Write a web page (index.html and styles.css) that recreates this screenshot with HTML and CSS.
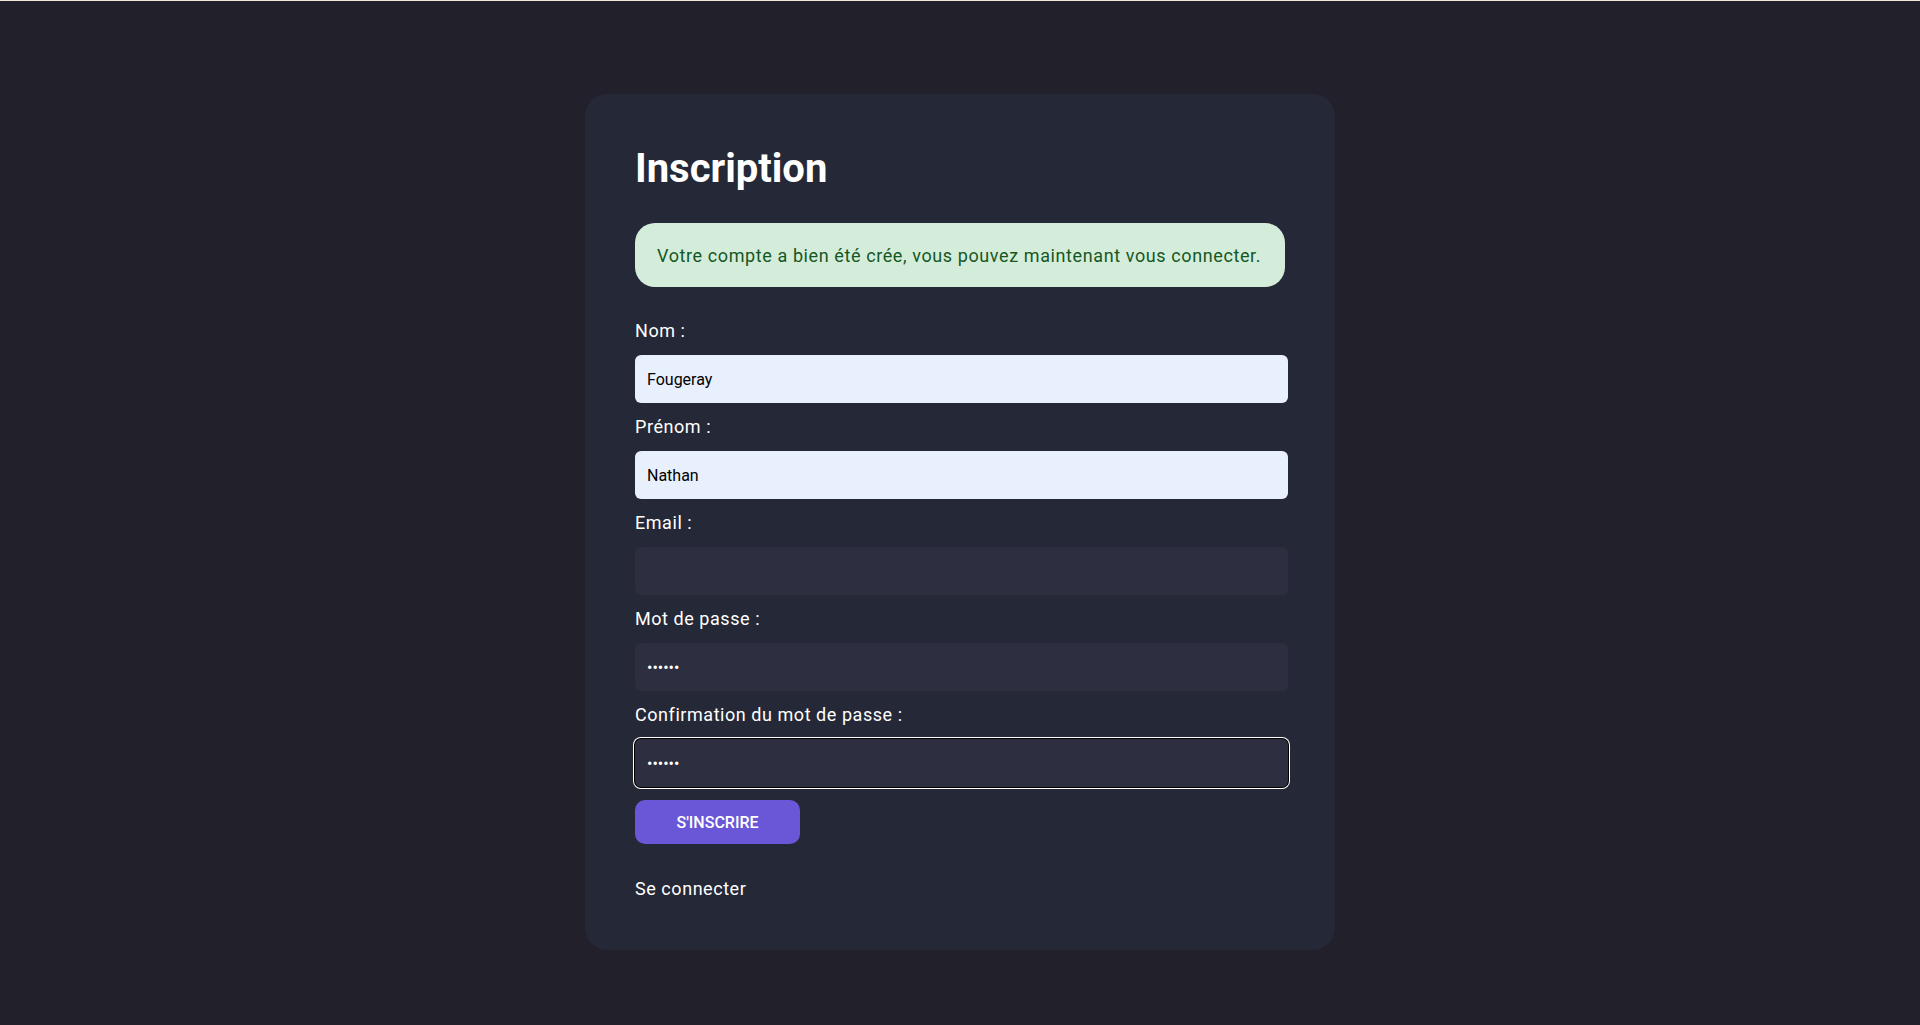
FILE: index.html
```html
<!DOCTYPE html>
<html lang="fr">
<head>
<meta charset="utf-8">
<title>Inscription</title>
<link rel="stylesheet" href="styles.css">
</head>
<body>
<main class="page">
  <section class="card">
    <h1 class="title">Inscription</h1>
    <div class="alert">Votre compte a bien été crée, vous pouvez maintenant vous connecter.</div>
    <form class="form">
      <label class="label" for="nom">Nom :</label>
      <input class="input input-filled" id="nom" type="text" value="Fougeray">
      <label class="label" for="prenom">Prénom :</label>
      <input class="input input-filled" id="prenom" type="text" value="Nathan">
      <label class="label" for="email">Email :</label>
      <input class="input" id="email" type="email" value="">
      <label class="label" for="mdp">Mot de passe :</label>
      <input class="input" id="mdp" type="password" value="123456">
      <label class="label" for="conf">Confirmation du mot de passe :</label>
      <input class="input input-focus" id="conf" type="password" value="123456">
      <button class="btn" type="button">S'inscrire</button>
    </form>
    <a class="link" href="#">Se connecter</a>
  </section>
</main>
</body>
</html>
```

FILE: styles.css
```css
* { box-sizing: border-box; }
html, body { margin: 0; padding: 0; }
body {
  background: #21202b;
  border-top: 1px solid #f3e9d9;
  font-family: Roboto, "Liberation Sans", sans-serif;
  color: #ffffff;
  min-height: 1025px;
}
.page {
  display: flex;
  justify-content: center;
  padding-top: 93px;
}
.card {
  width: 750px;
  background: #252837;
  border-radius: 22px;
  padding: 51px 50px 49px 50px;
  display: flex;
  flex-direction: column;
}
.title {
  margin: 0;
  font-size: 40px;
  line-height: 48px;
  font-weight: 700;
  color: #ffffff;
}
.alert {
  margin-top: 30px;
  background: #d4edda;
  color: #155724;
  border-radius: 20px;
  padding: 21px 18px 19px 22px;
  font-size: 18px;
  line-height: 24px;
  letter-spacing: 0.6px;
  height: 64px;
  white-space: nowrap;
}
.form {
  margin-top: 32px;
  display: flex;
  flex-direction: column;
  align-items: flex-start;
}
.label {
  font-size: 18px;
  line-height: 24px;
  letter-spacing: 0.55px;
  color: #ffffff;
  margin-bottom: 12px;
}
.input {
  width: calc(100% + 3px);
  height: 48px;
  border: none;
  border-radius: 6px;
  background: #2d2f40;
  color: #ffffff;
  font-family: Roboto, "Liberation Sans", sans-serif;
  font-size: 16px;
  padding: 0 12px;
  margin-bottom: 12px;
  outline: none;
}
.input-filled {
  background: #e8f0fe;
  color: #000000;
}
.input-focus {
  box-shadow: 0 0 0 1px #000000, 0 0 0 2px #ffffff;
}
.btn {
  margin-top: 1px;
  width: 165px;
  height: 44px;
  border: none;
  border-radius: 10px;
  background: #6957d8;
  color: #ffffff;
  font-family: Roboto, "Liberation Sans", sans-serif;
  font-size: 16px;
  font-weight: 500;
  text-transform: uppercase;
}
.link {
  margin-top: 33px;
  font-size: 18px;
  line-height: 24px;
  letter-spacing: 0.55px;
  color: #ffffff;
  text-decoration: none;
  align-self: flex-start;
}
```
